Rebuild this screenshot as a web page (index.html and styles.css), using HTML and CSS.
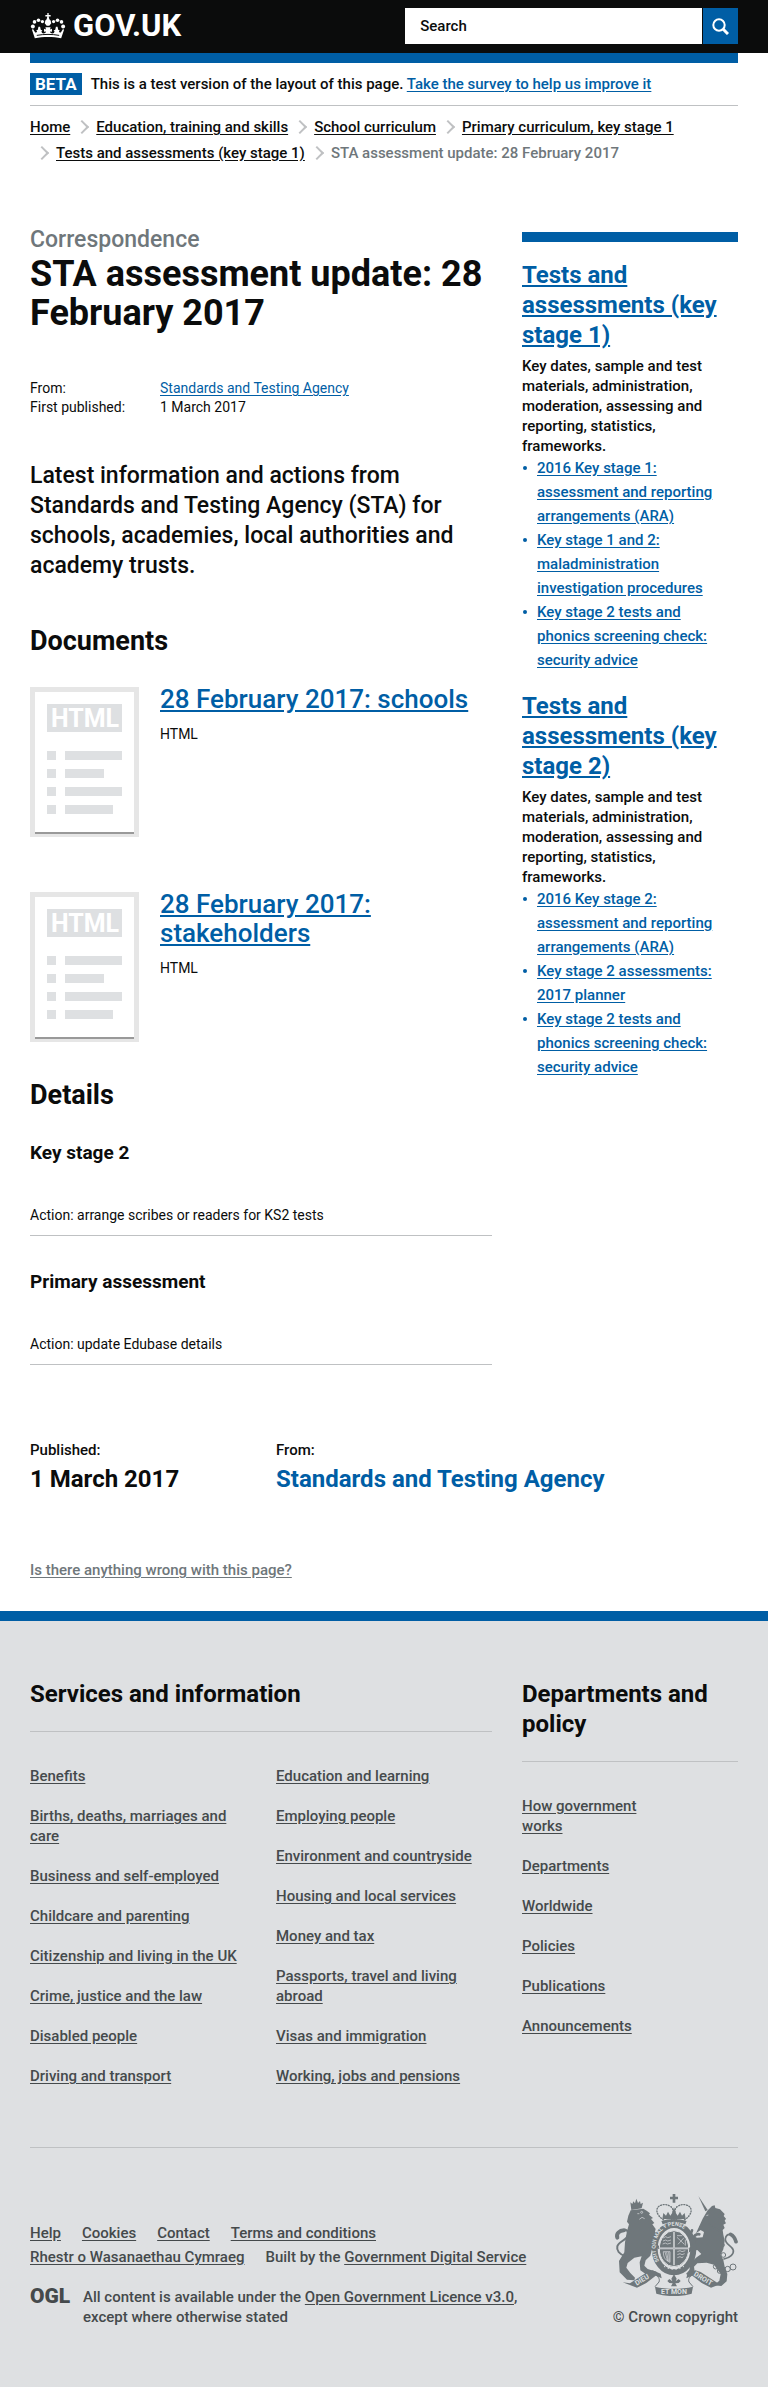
FILE: index.html
```html
<!DOCTYPE html>
<html lang="en">
<head>
<meta charset="utf-8">
<meta name="viewport" content="width=device-width, initial-scale=1">
<title>STA assessment update: 28 February 2017 - GOV.UK</title>
<link rel="stylesheet" href="styles.css">
</head>
<body>
<header class="header">
  <div class="wrap header-inner">
    <a class="logo" href="#">
      <svg class="crown" viewBox="30 36 108 79" aria-hidden="true">
        <g fill="#fff">
          <path d="M82 36h4v6h6v5h-6l2 8 4 4 2 8-6 8h-8l-6-8 2-8 4-4 2-8h-6v-5h6z"/>
          <circle cx="38" cy="77" r="6"/><circle cx="43" cy="63" r="5.5"/><circle cx="55" cy="58" r="5.5"/><circle cx="67" cy="62" r="5"/>
          <circle cx="130" cy="77" r="6"/><circle cx="125" cy="63" r="5.5"/><circle cx="113" cy="58" r="5.5"/><circle cx="101" cy="62" r="5"/>
          <path d="M44 113l-9-27 4-1 6 10c3 1 5 0 6-3l-3-3 5-2 2-9 5 0 2 9 5 2-3 3c1 4 3 6 6 6l6-1 2-5-6 1v-9l6 2-2-7h16l-2 7 6-2v9l-6-1 2 5 6 1c3 0 5-2 6-6l-3-3 5-2 2-9h5l2 9 5 2-3 3c1 3 3 4 6 3l6-10 4 1-9 27c-24-5-56-5-80 0z"/>
        </g>
        <path d="M50 104c22-4 46-4 68 0" fill="none" stroke="#0b0c0c" stroke-width="3"/>
      </svg>
      <span>GOV.UK</span>
    </a>
    <form class="search" role="search">
      <input type="search" placeholder="Search" aria-label="Search">
      <button type="button" aria-label="Search button">
        <svg viewBox="0 0 17 17" aria-hidden="true"><circle cx="7" cy="7" r="5.7"/><path d="M11 11l5 5"/></svg>
      </button>
    </form>
  </div>
</header>

<div class="wrap">
  <div class="beta-banner">
    <strong>BETA</strong>
    <span>This is a test version of the layout of this page. <a href="#">Take the survey to help us improve it</a></span>
  </div>
  <nav aria-label="Breadcrumb">
    <ol class="breadcrumbs">
      <li><a href="#">Home</a></li>
      <li><a href="#">Education, training and skills</a></li>
      <li><a href="#">School curriculum</a></li>
      <li><a href="#">Primary curriculum, key stage 1</a></li>
      <li><a href="#">Tests and assessments (key stage 1)</a></li>
      <li>STA assessment update: 28 February 2017</li>
    </ol>
  </nav>

  <div class="columns page">
    <main class="main">
      <p class="context">Correspondence</p>
      <h1>STA assessment update: 28 February 2017</h1>
      <dl class="metadata">
        <dt>From:</dt><dd><a href="#">Standards and Testing Agency</a></dd>
        <dt>First published:</dt><dd>1 March 2017</dd>
      </dl>
      <p class="intro">Latest information and actions from Standards and Testing Agency (STA) for schools, academies, local authorities and academy trusts.</p>

      <h2>Documents</h2>
      <div class="documents">
        <section class="document">
          <svg class="thumb" viewBox="0 0 109 150" aria-hidden="true">
            <path class="frame" d="M0 0h109v150H0z"/><path class="shade" d="M5 6h99v141H5z"/><path class="paper" d="M5 5h99v140H5z"/>
            <path class="ink" d="M17 17h75v28H17zM17 64h9v9h-9zM35 64h57v9H35zM17 82h9v9h-9zM35 82h39v9H35zM17 100h9v9h-9zM35 100h57v9H35zM17 118h9v9h-9zM35 118h48v9H35z"/>
            <text x="55" y="40">HTML</text>
          </svg>
          <div>
            <h3><a href="#">28 February 2017: schools</a></h3>
            <p>HTML</p>
          </div>
        </section>
        <section class="document">
          <svg class="thumb" viewBox="0 0 109 150" aria-hidden="true">
            <path class="frame" d="M0 0h109v150H0z"/><path class="shade" d="M5 6h99v141H5z"/><path class="paper" d="M5 5h99v140H5z"/>
            <path class="ink" d="M17 17h75v28H17zM17 64h9v9h-9zM35 64h57v9H35zM17 82h9v9h-9zM35 82h39v9H35zM17 100h9v9h-9zM35 100h57v9H35zM17 118h9v9h-9zM35 118h48v9H35z"/>
            <text x="55" y="40">HTML</text>
          </svg>
          <div>
            <h3><a href="#">28 February 2017: stakeholders</a></h3>
            <p>HTML</p>
          </div>
        </section>
      </div>

      <h2>Details</h2>
      <section class="detail">
        <h3>Key stage 2</h3>
        <p>Action: arrange scribes or readers for KS2 tests</p>
      </section>
      <section class="detail">
        <h3>Primary assessment</h3>
        <p>Action: update Edubase details</p>
      </section>
    </main>

    <aside class="sidebar">
      <section>
        <h2><a href="#">Tests and assessments (key stage 1)</a></h2>
        <p>Key dates, sample and test materials, administration, moderation, assessing and reporting, statistics, frameworks.</p>
        <ul>
          <li><a href="#">2016 Key stage 1: assessment and reporting arrangements (ARA)</a></li>
          <li><a href="#">Key stage 1 and 2: maladministration investigation procedures</a></li>
          <li><a href="#">Key stage 2 tests and phonics screening check: security advice</a></li>
        </ul>
      </section>
      <section>
        <h2><a href="#">Tests and assessments (key stage 2)</a></h2>
        <p>Key dates, sample and test materials, administration, moderation, assessing and reporting, statistics, frameworks.</p>
        <ul>
          <li><a href="#">2016 Key stage 2: assessment and reporting arrangements (ARA)</a></li>
          <li><a href="#">Key stage 2 assessments: 2017 planner</a></li>
          <li><a href="#">Key stage 2 tests and phonics screening check: security advice</a></li>
        </ul>
      </section>
    </aside>
  </div>

  <dl class="columns published">
    <div><dt>Published:</dt><dd>1 March 2017</dd></div>
    <div class="wide"><dt>From:</dt><dd><a href="#">Standards and Testing Agency</a></dd></div>
  </dl>
  <p class="report"><a href="#">Is there anything wrong with this page?</a></p>
</div>

<footer class="footer">
  <div class="wrap">
    <div class="columns categories">
      <section class="wide">
        <h2>Services and information</h2>
        <div class="lists">
          <ul>
            <li><a href="#">Benefits</a></li>
            <li><a href="#">Births, deaths, marriages and care</a></li>
            <li><a href="#">Business and self-employed</a></li>
            <li><a href="#">Childcare and parenting</a></li>
            <li><a href="#">Citizenship and living in the UK</a></li>
            <li><a href="#">Crime, justice and the law</a></li>
            <li><a href="#">Disabled people</a></li>
            <li><a href="#">Driving and transport</a></li>
          </ul>
          <ul>
            <li><a href="#">Education and learning</a></li>
            <li><a href="#">Employing people</a></li>
            <li><a href="#">Environment and countryside</a></li>
            <li><a href="#">Housing and local services</a></li>
            <li><a href="#">Money and tax</a></li>
            <li><a href="#">Passports, travel and living abroad</a></li>
            <li><a href="#">Visas and immigration</a></li>
            <li><a href="#">Working, jobs and pensions</a></li>
          </ul>
        </div>
      </section>
      <section>
        <h2>Departments and policy</h2>
        <ul class="narrow">
          <li><a href="#">How government works</a></li>
          <li><a href="#">Departments</a></li>
          <li><a href="#">Worldwide</a></li>
          <li><a href="#">Policies</a></li>
          <li><a href="#">Publications</a></li>
          <li><a href="#">Announcements</a></li>
        </ul>
      </section>
    </div>

    <div class="meta">
      <div class="meta-main">
        <ul class="meta-links">
          <li><a href="#">Help</a></li>
          <li><a href="#">Cookies</a></li>
          <li><a href="#">Contact</a></li>
          <li><a href="#">Terms and conditions</a></li>
          <li><a href="#">Rhestr o Wasanaethau Cymraeg</a></li>
          <li>Built by the <a href="#">Government Digital Service</a></li>
        </ul>
        <div class="licence">
          <span class="ogl">OGL</span>
          <p>All content is available under the <a href="#">Open Government Licence v3.0</a>, except where otherwise stated</p>
        </div>
      </div>
      <a class="copyright" href="#">
        <svg class="crest" viewBox="69 69 375 306" aria-hidden="true">
          <g fill="#6f777b">
            <path d="M248 69h8v8h8v8h-8v10h-8V85h-8v-8h8z"/>
            <path d="M121 94l6 5 3-8 5 6 4-14 5 13 6-6 2 9 7-4-4 17-31 5z"/>
            <path d="M122 118l38-5 10 6 10 8-3 4 12 10-6 3 10 12-6 4 10 14-2 8 12 14-18 26-8 32-14 14-4 16 10 10 26 8 4 8-32 2-20-14-2-24 6-18-22 4-20 16-4 14 12 16 14 14-2 8-22-2-22-22-2-34 16-26 2-30 6-34 6-20-6-8 4-18z"/>
            <path d="M325 75l28 42-7 4z"/>
            <path d="M338 143l14-24 14-14 8-2 2 8 14 4 14 14-3 6 7 8-4 6 4 8-8 4 4 10-6 6 2 14 4 18-4 26-8 16 8 16 4 20 8 22-2 22-16 14-22-2 16-14 4-20-20-28-22-6-28 2-10 10 2 14-18 12-8-4 10-12 4-22 18-16 14-10-12-12-20 4-16 12-6-10 22-16 2-18 8-8 26-2 4-16-10-6-14 10z"/>
          </g>
          <g fill="none" stroke="#6f777b" stroke-linecap="round">
            <path stroke-width="6" d="M104 254c-16-4-25-16-22-28 4-15 27-17 32-34 3-9-4-17-10-15"/>
            <path stroke-width="12" d="M82 200c-4-12 6-22 20-22"/>
            <path stroke-width="5" d="M402 264c18-4 30-15 28-26-3-15-25-17-24-34 1-8 7-14 14-14"/>
            <path stroke-width="11" d="M422 190c9 4 13 11 16 22"/>
            <path stroke-width="8" d="M206 230c-10-12-20-18-32-16M308 206c4-12 10-18 20-16M306 178l-5 14 18 12"/>
            <path stroke-width="4" d="M356 160l36 22"/>
            <path stroke-width="4" d="M221 147c-22-14-28-36-9-44 18-7 35 4 36 12 4 10 0 20-3 30M283 147c22-14 28-36 9-44-18-7-35 4-36 12-4 10 0 20 3 30" stroke-dasharray="3 5"/>
          </g>
          <path d="M217 144l3-18 8 8 6-12 7 12 5-7 6-19 6 19 5 7 7-12 6 12 8-8 3 18z" fill="#6f777b"/>
          <path d="M216 155c20-8 52-8 72 0" fill="none" stroke="#6f777b" stroke-width="10"/>
          <ellipse cx="252" cy="233" rx="58" ry="71" fill="none" stroke="#6f777b" stroke-width="18"/>
          <ellipse cx="252" cy="233" rx="44" ry="54" fill="#6f777b" stroke="#dee0e2" stroke-width="3"/>
          <path d="M252 183v100M208 232h88" stroke="#dee0e2" stroke-width="5"/>
          <path d="M252 183v100M208 232h88" stroke="#6f777b" stroke-width="1"/>
          <g fill="none" stroke="#dee0e2" stroke-width="2">
            <path d="M219 201l8-4 6 3 10-3M219 210l8-3 6 3 10-3M218 219l8-3 6 3 11-3M262 242l8-3 6 3 10-3M262 251l8-3 6 3 8-3M262 260l8-3 6 3 4-3M261 199l22 21M282 200l-18 20M261 194h16M286 206v18M220 242c0 20 8 26 20 32v-32zM225 243l8 27M230 243l5 28M236 243l2 28"/>
            <path stroke-width="3" d="M222 286c18 12 42 12 60 0" stroke-dasharray="4 8"/>
          </g>
          <g fill="none" stroke="#dee0e2" stroke-width="2"><circle cx="155" cy="124" r="3"/><path d="M142 128h6M148 145l8-6 8 4M349 134l6-2"/></g>
          <g fill="none" stroke="#6f777b" stroke-width="3"><circle cx="335" cy="170" r="6"/><circle cx="329" cy="212" r="6"/><circle cx="397" cy="222" r="6"/><circle cx="400" cy="252" r="7"/><circle cx="377" cy="287" r="7"/><circle cx="389" cy="300" r="7"/><circle cx="413" cy="294" r="8"/><circle cx="429" cy="288" r="9"/></g>
          <g fill="#6f777b">
            <path d="M98 334l22 3 52-34 16-5 24 10 3 14-18-8-28 22-28 14z"/>
            <path d="M406 334l-22 3-52-34-16-5-24 10-3 14 18-8 28 22 28 14z"/>
            <path d="M195 347c34 8 80 8 114 0l-4 21c-34 10-72 10-106 0z"/>
            <path d="M252 310l8 13-3 8 9-7 6 6-6 6-10 1 5 9h-18l5-9-10-1-6-6 6-6 9 7-3-8z"/>
          </g>
          <path d="M193 309c10 6 18 14 14 24l-12 14M311 309c-10 6-18 14-14 24l12 14" fill="none" stroke="#6f777b" stroke-width="3"/>
          <path id="motto-ring" d="M208 270c-18-27-15-66 8-91 20-20 50-20 70 0 25 27 26 70 5 98" fill="none"/>
          <g class="motto">
            <text x="252" y="369" text-anchor="middle">ET MON</text>
            <text transform="translate(140 344) rotate(-31)">DIEU</text>
            <text transform="translate(310 313) rotate(31)">DROIT</text>
            <text class="small"><textPath href="#motto-ring">SOIT QUI MAL Y PENSE</textPath></text>
          </g>
        </svg>
        <span>© Crown copyright</span>
      </a>
    </div>
  </div>
</footer>
</body>
</html>
```
FILE: styles.css
```css
* { box-sizing: border-box; }

body {
  margin: 0;
  background: #fff;
  color: #0b0c0c;
  font: 500 15px/20px Roboto, "Liberation Sans", sans-serif;
}

h1, h2, h3, p, ul, ol, dl, dd { margin: 0; padding: 0; }
ul, ol { list-style: none; }
a { color: #005ea5; text-underline-offset: 2px; }
svg { display: block; }

.wrap { max-width: 960px; margin: 0 auto; padding: 0 30px; }

.columns {
  display: grid;
  grid-template-columns: repeat(3, minmax(0, 1fr));
  column-gap: 30px;
  align-items: start;
}
.wide, .main { grid-column: span 2; }

/* Header */
.header { background: #0b0c0c; }
.header-inner {
  display: flex;
  justify-content: space-between;
  align-items: center;
  padding-top: 8px;
  padding-bottom: 9px;
}
.logo {
  display: flex;
  gap: 7px;
  align-items: center;
  color: #fff;
  font-size: 31px;
  line-height: 36px;
  font-weight: 700;
  text-decoration: none;
}
.crown { width: 36px; height: 26px; }
.search { display: flex; gap: 1px; width: 47%; }
.search input {
  flex: 1;
  min-width: 0;
  height: 36px;
  padding: 0 15px;
  border: 0;
  border-radius: 0;
  background: #fff;
  color: #0b0c0c;
  font: inherit;
  appearance: none;
}
.search input::placeholder { color: #0b0c0c; opacity: 1; }
.search button {
  width: 35px;
  height: 36px;
  padding: 0 9px;
  border: 0;
  background: #005ea5;
}
.search svg { width: 17px; fill: none; stroke: #fff; stroke-width: 2; }
.search path { stroke-width: 3; }

/* Beta banner and breadcrumbs */
.beta-banner {
  display: flex;
  align-items: center;
  gap: 9px;
  padding: 10px 0;
  border-top: 10px solid #005ea5;
  border-bottom: 1px solid #bfc1c3;
}
.beta-banner strong {
  padding: 0 5px;
  background: #005ea5;
  color: #fff;
  font-size: 17px;
  line-height: 22px;
}
.breadcrumbs {
  display: flex;
  flex-wrap: wrap;
  padding-top: 8px;
  line-height: 26px;
  color: #6f777b;
}
.breadcrumbs a { color: #0b0c0c; }
.breadcrumbs li + li { display: flex; align-items: center; }
.breadcrumbs li + li::before {
  content: "";
  width: 8px;
  height: 8px;
  margin: 0 9px 0 7px;
  border: solid #bfc1c3;
  border-width: 2px 2px 0 0;
  transform: rotate(45deg);
}

/* Main content */
.page { padding-top: 59px; }
.context { color: #6f777b; font-size: 23px; line-height: 30px; }
h1 { font-size: 36px; line-height: 39px; }
.metadata {
  display: grid;
  grid-template-columns: 130px 1fr;
  margin: 46px 0 44px;
  font-size: 14px;
  line-height: 19px;
  font-weight: 400;
}
.intro { font-size: 23px; line-height: 30px; }
.main h2 { margin-top: 45px; font-size: 27px; line-height: 30px; }
.documents { display: grid; gap: 53px; margin-top: 29px; }
.documents + h2 { margin-top: 38px; }
.document { display: flex; gap: 21px; font-size: 14px; font-weight: 400; }
.document h3 {
  margin-bottom: 10px;
  font-size: 26px;
  line-height: 29px;
  font-weight: 500;
}
.thumb { flex: none; width: 109px; height: 150px; margin-top: 2px; }
.frame { fill: #e6e6e6; }
.shade { fill: #999; }
.paper { fill: #fff; }
.ink { fill: #dee0e2; }
.thumb text {
  fill: #fff;
  font-size: 25px;
  font-weight: 700;
  text-anchor: middle;
}
.detail {
  margin-top: 33px;
  padding-bottom: 10px;
  border-bottom: 1px solid #bfc1c3;
  font-size: 14px;
  font-weight: 400;
}
h2 + .detail { margin-top: 30px; }
.detail h3 { margin-bottom: 40px; font-size: 19px; line-height: 25px; }

/* Sidebar */
.sidebar { margin-top: 7px; padding-top: 18px; border-top: 10px solid #005ea5; }
.sidebar section + section { margin-top: 19px; }
.sidebar h2 { margin-bottom: 6px; font-size: 24px; line-height: 30px; }
.sidebar ul { padding-right: 15px; line-height: 24px; }
.sidebar li { display: flex; gap: 10px; color: #005ea5; }
.sidebar li::before {
  content: "";
  flex: none;
  width: 4px;
  height: 4px;
  margin: 10px 0 0 1px;
  border-radius: 50%;
  background: #005ea5;
}

/* Publishing details */
.published { margin-top: 75px; }
.published dd {
  margin-top: 4px;
  font-size: 24px;
  line-height: 30px;
  font-weight: 700;
}
.published a { text-decoration: none; }
.report { padding: 66px 0 31px; }
.report a { color: #6f777b; }

/* Footer */
.footer {
  border-top: 10px solid #005ea5;
  background: #dee0e2;
  color: #454a4c;
}
.footer a { color: #454a4c; }
.categories { padding: 58px 0 41px; border-bottom: 1px solid #bfc1c3; }
.footer h2 {
  margin-bottom: 34px;
  padding-bottom: 22px;
  border-bottom: 1px solid #bfc1c3;
  color: #0b0c0c;
  font-size: 24px;
  line-height: 30px;
}
.lists { display: grid; grid-template-columns: 1fr 1fr; column-gap: 30px; }
.categories li { margin-bottom: 20px; }
.narrow { max-width: 140px; }

.meta {
  display: flex;
  justify-content: space-between;
  align-items: flex-end;
  gap: 30px;
  padding: 46px 0 60px;
}
.meta-main { flex: 1; max-width: 522px; }
.meta-links { display: flex; flex-wrap: wrap; column-gap: 21px; line-height: 24px; }
.licence { display: flex; gap: 12px; margin-top: 18px; }
.ogl { flex: none; width: 41px; font-size: 21px; line-height: 18px; font-weight: 900; }
.footer .copyright { text-align: right; text-decoration: none; white-space: nowrap; }
.crest { width: 125px; height: 102px; margin: 0 0 11px auto; }
.motto { fill: #dee0e2; font-size: 21px; font-weight: 700; }
.motto .small { font-size: 16px; }
```
